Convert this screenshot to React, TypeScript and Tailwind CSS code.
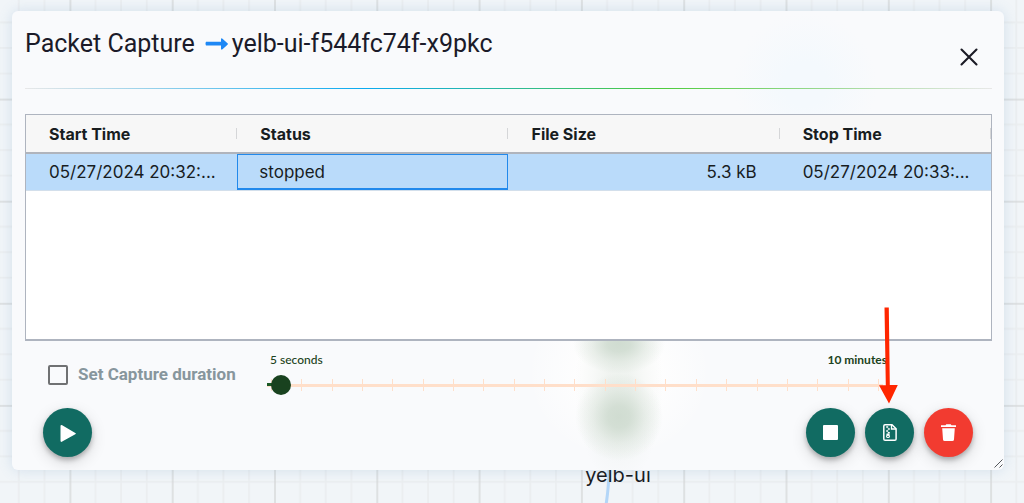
import { useState } from "react";

const columns = ["Start Time", "Status", "File Size", "Stop Time"];
const ticks = Array.from({ length: 21 }, (_, i) => i);

function GridCanvas() {
  return (
    <svg className="absolute inset-0 h-full w-full" aria-hidden="true">
      <defs>
        <pattern id="grid" x="69.4" y="98.6" width="102.3" height="102.1" patternUnits="userSpaceOnUse">
          <path d="M26.2 0V103M51.7 0V103M77.3 0V103M0 26H103M0 51.500H103M0 77H103" stroke="#ebeef0" strokeWidth="1.8" />
          <path d="M1 0V103M0 1H103" stroke="#d8dadb" strokeWidth="1.500" />
        </pattern>
      </defs>
      <rect width="100%" height="100%" fill="url(#grid)" />
      <path d="M609 470C609 485 608 492 606 505" stroke="#b3d6f8" strokeWidth="3" fill="none" />
      <text x="618" y="482" textAnchor="middle" fontSize="20" fontFamily="Inter, sans-serif" fill="#17191c">
        yelb-ui
      </text>
    </svg>
  );
}

function Backdrop() {
  return (
    <svg className="absolute inset-0 h-full w-full" aria-hidden="true">
      <defs>
        <radialGradient id="green">
          <stop offset="0" stopColor="#d0dcd1" />
          <stop offset="0.25" stopColor="#d0dcd1" stopOpacity="0.9" />
          <stop offset="0.6" stopColor="#d0dcd1" stopOpacity="0.4" />
          <stop offset="1" stopColor="#d0dcd1" stopOpacity="0" />
        </radialGradient>
        <radialGradient id="white">
          <stop offset="0.4" stopColor="#fefefe" />
          <stop offset="1" stopColor="#fefefe" stopOpacity="0" />
        </radialGradient>
        <radialGradient id="blue">
          <stop offset="0.3" stopColor="#f4f9fd" />
          <stop offset="1" stopColor="#f4f9fd" stopOpacity="0" />
        </radialGradient>
      </defs>
      <circle cx="793" cy="73" r="72" fill="url(#blue)" />
      <ellipse cx="607" cy="362" rx="92" ry="86" fill="url(#white)" />
      <ellipse cx="607" cy="376" rx="44" ry="98" fill="url(#green)" opacity="0.35" />
      <ellipse cx="607" cy="333" rx="46" ry="30" fill="url(#green)" />
      <circle cx="607" cy="406" r="44" fill="url(#green)" />
    </svg>
  );
}

const round =
  "flex size-[49px] items-center justify-center rounded-full text-white shadow-[0_3px_5px_rgba(0,0,0,0.25),0_5px_16px_rgba(0,0,0,0.14)]";

export default function App() {
  const [duration, setDuration] = useState(9);
  return (
    <div className="relative min-h-screen overflow-hidden bg-[#f1f5f8] pt-[11px] pr-5 pl-3">
      <GridCanvas />
      <section
        role="dialog"
        aria-labelledby="title"
        className="relative overflow-hidden rounded-md bg-[#f9fafc] pr-3 pb-[13px] pl-[13px] font-['Roboto',sans-serif] shadow-[0_0_14px_rgba(90,140,190,0.2)]"
      >
        <Backdrop />
        <header className="relative flex h-[77px] justify-between pt-[17px] pr-[14px]">
          <h1 id="title" className="flex h-8 items-center text-[25px] text-[#1b1b29]">
            Packet Capture
            <svg className="mr-1 ml-[10px] h-[14px] w-[23px]" viewBox="0 0 23 14" aria-hidden="true">
              <path d="M1 4.700h15V2.400q0-1.800 1.500-.7l5 4.600q.8.7 0 1.400l-5 4.600q-1.500 1.100-1.500-.7V8.500H1Q0 6.600 1 4.700Z" fill="#1e88f5" />
            </svg>
            yelb-ui-f544fc74f-x9pkc
          </h1>
          <button type="button" aria-label="Close" className="mt-5 size-[18px]">
            <svg viewBox="0 0 18 18" fill="none" stroke="#1b1b25" strokeWidth="2.1" strokeLinecap="round">
              <path d="M1.500 1.500l15 15M16.500 1.500l-15 15" />
            </svg>
          </button>
        </header>
        <div className="relative h-px bg-[linear-gradient(90deg,#e8e8e8,#0baaf0_35%,#4fcb3e_66%,#e8e8e8)]" />

        <div className="relative mt-[25px] h-[227px] border border-b-2 border-[#aeb4bf] bg-white text-[#181d1f]">
          <table className="w-full table-fixed border-separate border-spacing-0 font-['Inter',sans-serif]">
            <colgroup>
              <col className="w-[21.9%]" />
              <col className="w-[28.1%]" />
              <col className="w-[28.1%]" />
              <col className="w-[21.9%]" />
            </colgroup>
            <thead className="bg-[#f7f7f7] text-base">
              <tr>
                {columns.map((name) => (
                  <th key={name} scope="col" className="h-[39px] border-b-2 border-[#b0b4bc] p-0 text-left font-bold">
                    <div className="flex h-[11px] items-center border-r border-[#d5d6d8] pl-[23px]">{name}</div>
                  </th>
                ))}
              </tr>
            </thead>
            <tbody className="text-[17px]">
              <tr className="bg-[#badbfa]">
                <td className="h-[37px] border-b border-[#d3dfeb] p-0 pt-[2px] pl-[23px]">05/27/2024 20:32:...</td>
                <td className="border-b border-[#d3dfeb] p-0">
                  <div className="flex h-9 items-center border border-b-2 border-[#2189ec] pt-[3px] pl-[21px]">stopped</div>
                </td>
                <td className="border-b border-[#d3dfeb] p-0 pt-[2px] pr-[23px] text-right">5.3 kB</td>
                <td className="border-b border-[#d3dfeb] p-0 pt-[2px] pl-[23px]">05/27/2024 20:33:...</td>
              </tr>
            </tbody>
          </table>
        </div>

        <div className="relative flex h-[67px] pr-[109px] pl-[23px]">
          <label className="mt-6 flex h-5 w-[219px] shrink-0 items-center gap-[10px] text-[17px] font-bold text-[#87969d]">
            <input type="checkbox" className="size-5 appearance-none rounded-xs border-2 border-[#707173] bg-transparent" />
            Set Capture duration
          </label>
          <div className="flex-1 font-['Lato',sans-serif] text-[#1c4220]">
            <div className="mt-[11px] flex h-4 items-center justify-between pl-[3px] text-xs font-bold">
              <span className="font-medium">5 seconds</span>
              <span className="-mr-1">10 minutes</span>
            </div>
            <div className="relative mt-[7px] h-5">
              <div className="absolute inset-0 flex items-center justify-between bg-[linear-gradient(#ffdfca,#ffdfca)] bg-[length:100%_3px] bg-center bg-no-repeat px-1">
                {ticks.map((t) => (
                  <span key={t} className="h-3 w-px bg-[#ffdfca]" />
                ))}
              </div>
              <div className="absolute top-2 left-0 h-[3px] w-3 bg-[#1c5a26]" />
              <input
                type="range"
                aria-label="Capture duration"
                min={5}
                max={600}
                value={duration}
                onChange={(e) => setDuration(Number(e.target.value))}
                className="absolute inset-0 h-5 w-full appearance-none bg-transparent [&::-webkit-slider-thumb]:size-5 [&::-webkit-slider-thumb]:appearance-none [&::-webkit-slider-thumb]:rounded-full [&::-webkit-slider-thumb]:bg-[#19421f]"
              />
            </div>
          </div>
        </div>

        <footer className="relative flex items-center gap-[10px] pr-[19px] pl-[18px]">
          <button type="button" aria-label="Start" className={`${round} mr-auto bg-[#116b62]`}>
            <svg className="size-[18px]" viewBox="0 0 18 18" fill="currentColor">
              <path d="M1.500 2.300Q1.500.3 3.200 1.200L16.300 8.900q1.200.7 0 1.400L3.200 17.600q-1.700.9-1.700-1.100Z" />
            </svg>
          </button>
          <button type="button" aria-label="Stop" className={`${round} bg-[#116b62]`}>
            <span className="size-[15px] rounded-[1px] bg-white" />
          </button>
          <button type="button" aria-label="Download" className={`${round} bg-[#116b62]`}>
            <svg className="h-[17px] w-[14px]" viewBox="0 0 14 17" fill="none" stroke="currentColor">
              <path d="M2 .8h7l4.100 4v10.100q0 1.300-1.300 1.300H2.100Q.8 16.200.8 14.900V2.100Q.8.8 2 .8Z" strokeWidth="1.500" />
              <path d="M8.500 1v4h4.500" strokeWidth="1.300" />
              <path d="M3.200 3h2M4.800 5h2M3.200 7h2M4.800 8.700h2" strokeWidth="1.400" />
              <path d="M3.600 9.500h2.800l.5 3q0 1.500-1.900 1.500t-1.900-1.500Z" fill="currentColor" stroke="none" />
              <path d="M4.200 12.400h1.600" stroke="#116b62" strokeWidth="1" />
            </svg>
          </button>
          <button type="button" aria-label="Delete" className={`${round} bg-[#f23b30]`}>
            <svg className="h-[17px] w-[15px]" viewBox="0 0 15 17" fill="currentColor">
              <path d="M0 1.300h4.500l.8-1h4.400l.8 1H15v1.800H0Z" />
              <path d="M1.200 4.300h12.600L13 15.400Q12.900 17 11.300 17H3.700Q2.100 17 2 15.400Z" />
            </svg>
          </button>
        </footer>
        <svg className="absolute right-px bottom-[2px] size-[9px]" viewBox="0 0 9 9" stroke="#55585c" strokeWidth="1" aria-hidden="true">
          <path d="M.5 8.500l8-8M5.500 8.500l3-3" />
        </svg>
      </section>
      <svg className="pointer-events-none absolute top-[307px] left-[879px] h-[97px] w-5" viewBox="0 0 20 97" fill="#ff2600" aria-hidden="true">
        <path d="M5.500.5h4.300l1 77.500h8L10 96.500 0 78.300h6.800Z" />
      </svg>
    </div>
  );
}
